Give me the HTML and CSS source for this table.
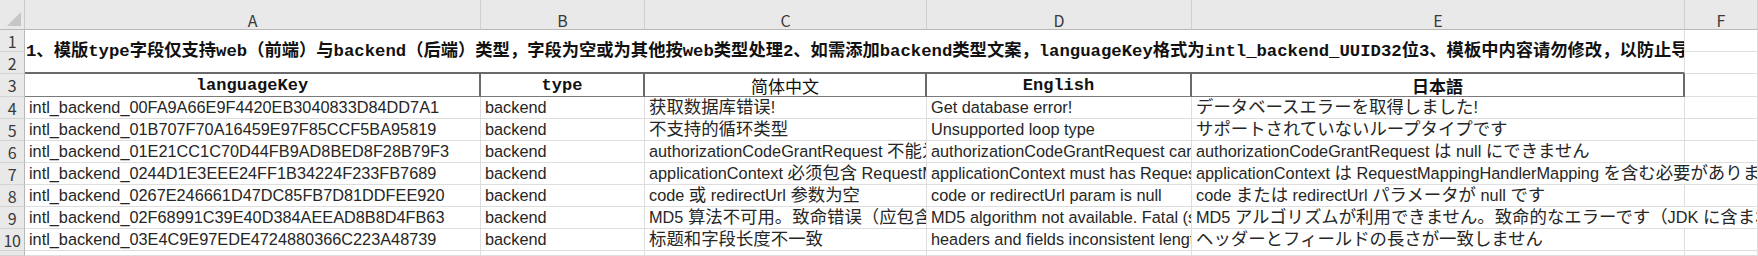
FILE: index.html
```html
<!DOCTYPE html>
<html lang="zh-CN">
<head>
<meta charset="utf-8">
<title>Sheet</title>
<link rel="stylesheet" href="styles.css">
</head>
<body>
<div class="sheet">
  <div class="corner"><span class="tri"></span></div>
  <div class="colh">A</div>
  <div class="colh">B</div>
  <div class="colh">C</div>
  <div class="colh">D</div>
  <div class="colh">E</div>
  <div class="colh">F</div>

  <div class="rowh">1</div>
  <div class="title"><span class="title-text">1、模版type字段仅支持web（前端）与backend（后端）类型，字段为空或为其他按web类型处理2、如需添加backend类型文案，languageKey格式为intl_backend_UUID32位3、模板中内容请勿修改，以防止导入失败</span></div>
  <div class="cell"></div>
  <div class="rowh">2</div>
  <div class="cell"></div>

  <div class="rowh">3</div>
  <div class="hd mono">languageKey</div>
  <div class="hd mono">type</div>
  <div class="hd cjk">简体中文</div>
  <div class="hd mono">English</div>
  <div class="hd cjkb">日本語</div>
  <div class="cell"></div>

  <div class="rowh">4</div>
  <div class="cell">intl_backend_00FA9A66E9F4420EB3040833D84DD7A1</div>
  <div class="cell">backend</div>
  <div class="cell"><span class="h">获取数据库错误</span>!</div>
  <div class="cell">Get database error!</div>
  <div class="cell ja"><span class="h">データベースエラーを取得しました</span>!</div>
  <div class="cell"></div>

  <div class="rowh">5</div>
  <div class="cell">intl_backend_01B707F70A16459E97F85CCF5BA95819</div>
  <div class="cell">backend</div>
  <div class="cell"><span class="h">不支持的循环类型</span></div>
  <div class="cell">Unsupported loop type</div>
  <div class="cell ja"><span class="h">サポートされていないループタイプです</span></div>
  <div class="cell"></div>

  <div class="rowh">6</div>
  <div class="cell">intl_backend_01E21CC1C70D44FB9AD8BED8F28B79F3</div>
  <div class="cell">backend</div>
  <div class="cell">authorizationCodeGrantRequest <span class="h">不能为空</span></div>
  <div class="cell">authorizationCodeGrantRequest cannot be null</div>
  <div class="cell ja">authorizationCodeGrantRequest <span class="h">は</span> null <span class="h">にできません</span></div>
  <div class="cell"></div>

  <div class="rowh">7</div>
  <div class="cell">intl_backend_0244D1E3EEE24FF1B34224F233FB7689</div>
  <div class="cell">backend</div>
  <div class="cell">applicationContext <span class="h">必须包含</span> RequestMappingHandlerMapping</div>
  <div class="cell">applicationContext must has RequestMappingHandlerMapping</div>
  <div class="cell ja wide">applicationContext <span class="h">は</span> RequestMappingHandlerMapping <span class="h">を含む必要があります</span></div>

  <div class="rowh">8</div>
  <div class="cell">intl_backend_0267E246661D47DC85FB7D81DDFEE920</div>
  <div class="cell">backend</div>
  <div class="cell">code <span class="h">或</span> redirectUrl <span class="h">参数为空</span></div>
  <div class="cell">code or redirectUrl param is null</div>
  <div class="cell ja">code <span class="h">または</span> redirectUrl <span class="h">パラメータが</span> null <span class="h">です</span></div>
  <div class="cell"></div>

  <div class="rowh">9</div>
  <div class="cell">intl_backend_02F68991C39E40D384AEEAD8B8D4FB63</div>
  <div class="cell">backend</div>
  <div class="cell">MD5 <span class="h">算法不可用。致命错误（应包含在</span> JDK <span class="h">中）</span></div>
  <div class="cell">MD5 algorithm not available. Fatal (should be in the JDK)</div>
  <div class="cell ja wide">MD5 <span class="h">アルゴリズムが利用できません。致命的なエラーです（</span>JDK <span class="h">に含まれているはずです）</span></div>

  <div class="rowh">10</div>
  <div class="cell">intl_backend_03E4C9E97EDE4724880366C223A48739</div>
  <div class="cell">backend</div>
  <div class="cell"><span class="h">标题和字段长度不一致</span></div>
  <div class="cell">headers and fields inconsistent length</div>
  <div class="cell ja"><span class="h">ヘッダーとフィールドの長さが一致しません</span></div>
  <div class="cell"></div>

  <div class="rowh"></div>
  <div class="cell"></div>
  <div class="cell"></div>
  <div class="cell"></div>
  <div class="cell"></div>
  <div class="cell"></div>
  <div class="cell"></div>
</div>
</body>
</html>
```

FILE: styles.css
```css
* { box-sizing: border-box; }
html, body { margin: 0; padding: 0; background: #ffffff; }
body { width: 1758px; height: 256px; overflow: hidden; }

.sheet {
  display: grid;
  grid-template-columns: 25px 456px 164px 282px 265px 493px 73px;
  grid-template-rows: 30px 22px 22px 23px repeat(7, 22px) 5px;
  font-family: "Liberation Sans", "Noto Sans CJK SC", sans-serif;
  font-size: 16.3px;
  color: #262626;
}

.corner {
  background: #e9e9e9;
  border-right: 1px solid #c9c9c9;
  border-bottom: 1px solid #b8b8b8;
  position: relative;
}
.tri {
  position: absolute;
  right: 3px;
  bottom: 3px;
  width: 0;
  height: 0;
  border-left: 14px solid transparent;
  border-bottom: 14px solid #c6c6c6;
}

.colh {
  background: #e9e9e9;
  border-right: 1px solid #cfcfcf;
  border-bottom: 1px solid #b8b8b8;
  display: flex;
  align-items: center;
  justify-content: center;
  padding-top: 11px;
  color: #3a3a3a;
  font-family: "Noto Sans CJK SC", sans-serif;
  font-size: 16px;
}

.rowh {
  background: #e9e9e9;
  border-right: 1px solid #b8b8b8;
  border-bottom: 1px solid #d2d2d2;
  display: flex;
  align-items: center;
  justify-content: center;
  color: #3a3a3a;
  font-family: "Noto Sans CJK SC", sans-serif;
  font-size: 16px;
  line-height: 1;
  letter-spacing: -0.5px;
}

.cell {
  border-right: 1px solid #dedede;
  border-bottom: 1px solid #dedede;
  white-space: nowrap;
  overflow: hidden;
  padding-left: 4px;
  line-height: 21px;
}
.h {
  font-family: "Noto Sans CJK SC", sans-serif;
  font-size: 17.4px;
  line-height: 1;
}
.ja .h { font-family: "Noto Sans CJK JP", sans-serif; }
.wide { grid-column: span 2; }

.title {
  grid-column: span 5;
  grid-row: span 2;
  border-bottom: 2px solid #6a6a6a;
  border-right: 1px solid #dedede;
  overflow: hidden;
  white-space: nowrap;
  display: flex;
  align-items: center;
  padding-bottom: 6px;
}
.title-text {
  font-family: "Liberation Mono", "Noto Sans CJK SC", monospace;
  font-weight: 700;
  font-size: 17.3px;
  color: #111;
  padding-left: 1px;
}

.hd {
  border-right: 2px solid #6a6a6a;
  border-bottom: 1px solid #7a7a7a;
  display: flex;
  align-items: center;
  justify-content: center;
  white-space: nowrap;
  overflow: hidden;
  color: #111;
}
.mono {
  font-family: "Liberation Mono", monospace;
  font-weight: 700;
  font-size: 17px;
}
.cjk { font-family: "Noto Sans CJK SC", sans-serif; font-weight: 400; font-size: 17px; }
.cjkb { font-family: "Noto Sans CJK JP", sans-serif; font-weight: 700; font-size: 17px; }
```
